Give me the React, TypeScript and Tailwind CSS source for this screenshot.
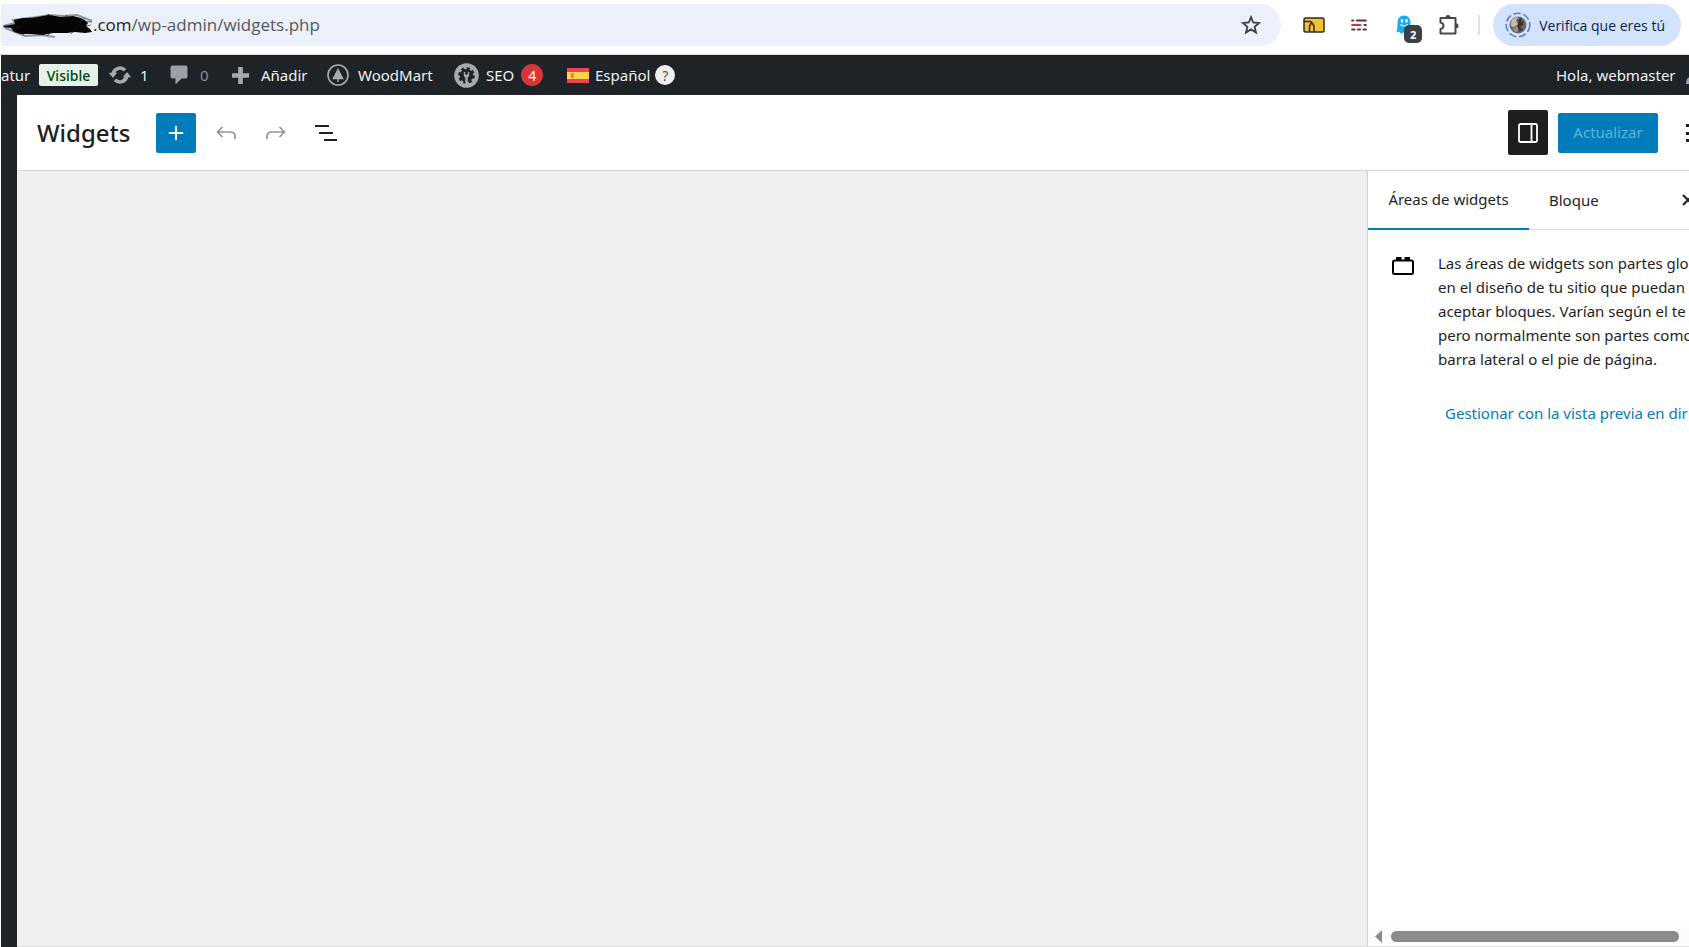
import type { ReactNode } from "react";

const EXTENSION_BUTTON = "flex size-8 items-center justify-center rounded-full";
const EDITOR_BUTTON = "flex size-10 shrink-0 items-center justify-center rounded-xs";

function BrowserBar() {
  return (
    <div className="flex h-[55px] shrink-0 items-start border-b border-[#dadcdc] bg-white pt-1 pr-2">
      <div className="flex h-[42px] flex-1 items-center rounded-r-full bg-[#ebf0fa] pr-3">
        <svg className="h-8 w-[92px] shrink-0" viewBox="0 0 92 32" aria-hidden="true">
          <path
            d="M2 17 L10 15 L14 14 L12 11 L20 10 L36 8 L48 6 L62 7 L76 6 L86 10 L91 12 M4 19 L12 22 L24 27 L40 26 L54 28"
            fill="none"
            stroke="#55585d"
            strokeWidth="2"
            strokeOpacity="0.6"
          />
          <path
            d="M3 17 L9 16 L14 15 L13 11 L22 9 L30 9 L48 6 L60 8 L72 7 L80 9 L85 12 L87 14 L85 17 L89 20 L91 23 L84 24 L74 23 L66 24 L52 24 L42 26 L30 25 L20 25 L13 23 L10 19 L3 18 Z"
            fill="#050505"
          />
          <path
            d="M12 22 L30 8 M22 26 L48 5 M46 27 L66 6 M70 25 L84 9 M2 18 H20 M78 12 L91 13 M80 18 L90 16"
            stroke="#111"
            strokeOpacity="0.6"
          />
        </svg>
        <label htmlFor="address" className="font-['Open_Sans',sans-serif] text-[17px] text-[#1f2023]">
          .com
        </label>
        <input
          id="address"
          defaultValue="/wp-admin/widgets.php"
          className="min-w-0 flex-1 bg-transparent font-['Open_Sans',sans-serif] text-[17px] text-[#55585d] outline-none"
        />
        <button aria-label="Añadir a favoritos" className="flex size-9 items-center justify-center">
          <svg width="20" height="20" viewBox="0 0 20 20" fill="none" stroke="#3f4246" strokeWidth="1.8">
            <path d="M10 2.2 L12.2 7.5 L18 8 L13.6 11.8 L15 17.5 L10 14.4 L5 17.5 L6.4 11.8 L2 8 L7.8 7.5 Z" />
          </svg>
        </button>
      </div>

      <div className="flex h-[42px] items-center gap-[13px] pl-[17px]">
        <button aria-label="Carpeta" className={EXTENSION_BUTTON}>
          <svg width="22" height="16" viewBox="0 0 22 16" fill="#f2c230" stroke="#2e2a20" strokeWidth="1.5">
            <rect x="1" y="1" width="20" height="14" rx="1.5" />
            <path d="M1 4.5 H7 Q9 4.5 9 7 M6.5 15 V9 L8 6.5 H9.5 L11 9 V15" fill="none" />
          </svg>
        </button>
        <button aria-label="Lista de bloqueo" className={EXTENSION_BUTTON}>
          <svg width="16" height="12" viewBox="0 0 16 12" strokeWidth="2.2" strokeLinecap="round">
            <path d="M1.2 1.5 H2.4 M6 1.5 H14.8 M1.2 10.5 H3.5 M7 10.5 H9 M12.5 10.5 H14.8 M13.5 6 H14.8" stroke="#4a403d" />
            <path d="M1.2 6 H9.5" stroke="#e02f36" />
          </svg>
        </button>
        <button aria-label="Bloqueador, 2 rastreadores" className={`relative ${EXTENSION_BUTTON}`}>
          <svg width="16" height="20" viewBox="0 0 16 20">
            <path
              d="M8 0.5 C3.8 0.5 1.6 3.5 1.6 7.5 C1.6 11 1.4 14 0.4 17.6 L3.4 16.8 L5.5 19 L8 17 L10.5 19 L12.6 16.8 L15.6 17.6 C14.6 14 14.4 11 14.4 7.5 C14.4 3.5 12.2 0.5 8 0.5 Z"
              fill="#12aef0"
            />
            <ellipse cx="6" cy="5.8" rx="1.3" ry="1.9" fill="#fff" />
            <ellipse cx="10.5" cy="5.8" rx="1.3" ry="1.9" fill="#fff" />
            <path d="M4.5 9.5 Q8 12.5 11.8 9.5" fill="none" stroke="#fff" strokeWidth="1.2" />
          </svg>
          <span className="absolute top-4 left-4 flex h-[18px] w-[18px] items-center justify-center rounded-[5px] bg-[#3c4043] text-[11px] leading-none font-bold text-white">
            2
          </span>
        </button>
        <button aria-label="Extensiones" className={EXTENSION_BUTTON}>
          <svg width="22" height="22" viewBox="0 0 22 22" fill="none" stroke="#45484c" strokeWidth="2" strokeLinejoin="round">
            <path d="M2.5 4 H17.5 V19.5 H2.5 V15 Q5.5 14.5 5.5 11.8 Q5.5 9 2.5 8.5 Z" />
            <path d="M7.5 3.5 A2.5 2.5 0 0 1 12.5 3.5 Z M18 9.3 A2.5 2.5 0 0 1 18 14.3 Z" fill="#45484c" stroke="none" />
          </svg>
        </button>
        <div className="h-5 w-0.5 bg-[#d5e2fb]" />
        <button className="flex h-[42px] items-center gap-2 rounded-full bg-[#d3e2fd] pr-4 pl-3 font-['Open_Sans',sans-serif] text-[14px] whitespace-nowrap text-[#0b1f4b]">
          <svg width="26" height="26" viewBox="0 0 26 26" aria-hidden="true">
            <circle cx="13" cy="13" r="11.8" fill="none" stroke="#5f7fc0" strokeWidth="1.6" strokeDasharray="7.5 2.6" />
            <circle cx="13" cy="13" r="8.5" fill="#6e6b67" />
            <path d="M6 10 Q8 5 13 5 L11 9 L13 12 L9 15 L6 14 Z" fill="#c2beb6" />
            <path d="M14 7 L17 6 L16 10 L19 9 L18 13 L15 15 L18 18 L13 20 L12 17 Z" fill="#35322f" />
            <path d="M8 17 L12 14 L14 19 L10 20 Z" fill="#96918a" />
          </svg>
          Verifica que eres tú
        </button>
      </div>
    </div>
  );
}

function AdminItem({ icon, children, className = "" }: { icon?: ReactNode; children?: ReactNode; className?: string }) {
  return (
    <a href="#" className={`flex h-full shrink-0 items-center whitespace-nowrap ${className}`}>
      {icon}
      {children}
    </a>
  );
}

function GearIcon() {
  return (
    <svg width="25" height="25" viewBox="0 0 25 25" aria-hidden="true">
      <circle cx="12.5" cy="12.5" r="12.3" fill="#a7aaad" />
      <circle cx="12.5" cy="12.5" r="6.6" fill="#1d2327" />
      <circle cx="12.5" cy="12.5" r="7" fill="none" stroke="#1d2327" strokeWidth="2.6" strokeDasharray="3.1 2.4" />
      <path d="M9.8 9 V12.5 Q9.8 14 11.3 14.6 V21 H13.7 V14.6 Q15.2 14 15.2 12.5 V9 H13.8 V11.5 H11.2 V9 Z" fill="#a7aaad" />
    </svg>
  );
}

function AdminBar() {
  return (
    <nav className="flex h-10 shrink-0 items-center overflow-hidden bg-[#1d2327] text-[15px] text-[#f0f0f1]">
      <AdminItem className="w-[38px]">atur</AdminItem>
      <AdminItem>
        <span className="flex h-[22px] w-[59px] items-center justify-center rounded-xs bg-[#e6f2e8] text-[14px] font-medium text-[#00450c]">
          Visible
        </span>
      </AdminItem>
      <AdminItem
        className="w-[72px] gap-2 pl-[10px]"
        icon={
          <svg width="24" height="20" viewBox="0 0 24 20" fill="none" aria-hidden="true">
            <path d="M5.2 8.5 A7 7 0 0 1 17 5.2 M18.8 11.5 A7 7 0 0 1 7 14.8" stroke="#a7aaad" strokeWidth="3.4" />
            <path d="M0.8 7.8 H9.2 L5 13 Z M23.2 12.2 H14.8 L19 7 Z" fill="#a7aaad" />
          </svg>
        }
      >
        1
      </AdminItem>
      <AdminItem
        className="w-[62px] gap-3 text-[#8c9095]"
        icon={
          <svg width="18" height="20" viewBox="0 0 18 20" fill="#9ca1a7" aria-hidden="true">
            <path d="M2.5 0.5 H15.5 Q17.5 0.5 17.5 2.5 V11.5 Q17.5 13.5 15.5 13.5 H11.5 L5.5 19.5 V13.5 H2.5 Q0.5 13.5 0.5 11.5 V2.5 Q0.5 0.5 2.5 0.5 Z" />
          </svg>
        }
      >
        0
      </AdminItem>
      <AdminItem
        className="w-[95px] gap-3"
        icon={
          <svg width="17" height="17" viewBox="0 0 17 17" aria-hidden="true">
            <path d="M6.2 0 H10.8 V6.2 H17 V10.8 H10.8 V17 H6.2 V10.8 H0 V6.2 H6.2 Z" fill="#a7aaad" />
          </svg>
        }
      >
        Añadir
      </AdminItem>
      <AdminItem
        className="w-[127px] gap-[9px]"
        icon={
          <svg width="22" height="22" viewBox="0 0 22 22" aria-hidden="true">
            <circle cx="11" cy="11" r="10" fill="none" stroke="#a7aaad" strokeWidth="1.6" />
            <path d="M11 4 L16.8 15.2 H11.7 V18 H10.3 V15.2 H5.2 Z" fill="#a7aaad" />
          </svg>
        }
      >
        WoodMart
      </AdminItem>
      <AdminItem className="w-[113px] gap-[7px]" icon={<GearIcon />}>
        SEO
        <span className="flex size-[22px] items-center justify-center rounded-full bg-[#d63638] text-[14px] text-white">4</span>
      </AdminItem>
      <AdminItem
        className="gap-[6px]"
        icon={
          <svg width="22" height="15" viewBox="0 0 22 15" aria-hidden="true">
            <rect width="22" height="15" fill="#ee4453" />
            <rect y="4" width="22" height="7" fill="#fbd34e" />
            <path d="M4 5.5 H7 V6.8 H5.5 V8 H7 V9.5 H4 Z" fill="#e2663f" />
          </svg>
        }
      >
        Español
        <span className="-ml-px flex size-5 items-center justify-center rounded-full bg-[#f0f0f1] text-[14px] text-[#50575e]">?</span>
      </AdminItem>
      <AdminItem className="ml-auto w-[133px] gap-[10px]">
        Hola, webmaster
        <svg className="shrink-0" width="20" height="20" viewBox="0 0 20 20" fill="#8fa2ad" aria-hidden="true">
          <circle cx="10" cy="7" r="4.5" />
          <path d="M0 19 Q0 11.5 6 11.5 H14 Q20 11.5 20 19 Z" />
        </svg>
      </AdminItem>
    </nav>
  );
}

function EditorHeader() {
  return (
    <header className="flex h-[76px] shrink-0 items-center overflow-hidden border-b border-[#d6d6d6] bg-white pl-5">
      <h1 className="w-[119px] text-[24px] font-medium text-[#1e1e1e]">Widgets</h1>
      <div className="flex gap-[10px]">
        <button aria-label="Añadir bloque" className={`${EDITOR_BUTTON} bg-[#007cba]`}>
          <svg width="16" height="16" viewBox="0 0 16 16" stroke="#fff" strokeWidth="1.8">
            <path d="M8 0.8 V15.2 M0.8 8 H15.2" />
          </svg>
        </button>
        <button aria-label="Deshacer" disabled className={EDITOR_BUTTON}>
          <svg width="20" height="16" viewBox="0 0 20 16" fill="none" stroke="#949494" strokeWidth="1.7">
            <path d="M6.5 2 L1.5 7 L6.5 12 M1.5 7 H14 Q19 7 19 11 V14" />
          </svg>
        </button>
        <button aria-label="Rehacer" disabled className={EDITOR_BUTTON}>
          <svg width="20" height="16" viewBox="0 0 20 16" fill="none" stroke="#949494" strokeWidth="1.7">
            <path d="M13.5 2 L18.5 7 L13.5 12 M18.5 7 H6 Q1 7 1 11 V14" />
          </svg>
        </button>
        <button aria-label="Vista de lista" className={EDITOR_BUTTON}>
          <svg width="24" height="18" viewBox="0 0 24 18" stroke="#1e1e1e" strokeWidth="2">
            <path d="M1 2 H15 M5 9 H19 M10 16 H23" />
          </svg>
        </button>
      </div>
      <div className="-mr-[19px] ml-auto flex items-center gap-[10px]">
        <button aria-label="Ajustes" className="flex h-[45px] w-10 items-center justify-center rounded-xs bg-[#1e1e1e]">
          <svg width="20" height="20" viewBox="0 0 20 20" fill="none" stroke="#fff" strokeWidth="1.8">
            <rect x="1" y="1" width="18" height="18" rx="1.5" />
            <path d="M13.5 1 V19" />
          </svg>
        </button>
        <button disabled className="h-10 w-[100px] rounded-xs bg-[#007cba] text-[15px] text-[#66b0d6]">
          Actualizar
        </button>
        <button aria-label="Opciones" className={EDITOR_BUTTON}>
          <svg width="4" height="20" viewBox="0 0 4 20" fill="#1e1e1e">
            <rect y="1" width="4" height="3" />
            <rect y="9" width="4" height="3" />
            <rect y="16" width="4" height="3" />
          </svg>
        </button>
      </div>
    </header>
  );
}

function Sidebar() {
  return (
    <aside className="flex w-[322px] shrink-0 flex-col overflow-hidden border-l border-[#cfcfcf] bg-white text-[15px] text-[#1e1e1e]">
      <div role="tablist" className="flex h-[59px] w-[350px] shrink-0 border-b border-[#dddddd]">
        <button role="tab" aria-selected="true" className="-mb-px w-[161px] border-b-2 border-[#007cba] whitespace-nowrap">
          Áreas de widgets
        </button>
        <button role="tab" aria-selected="false" className="px-5">
          Bloque
        </button>
        <button aria-label="Cerrar" className="mr-[24px] ml-auto">
          <svg width="12" height="12" viewBox="0 0 12 12" stroke="#1e1e1e" strokeWidth="2">
            <path d="M1 1 L11 11 M11 1 L1 11" />
          </svg>
        </button>
      </div>

      <div className="flex w-[400px] flex-1 items-start pt-5 pl-6">
        <svg className="mt-[7px] shrink-0" width="22" height="18" viewBox="0 0 22 18" fill="none" aria-hidden="true">
          <rect x="1" y="3.5" width="20" height="13.5" rx="1.5" stroke="#000" strokeWidth="2" />
          <path d="M4 0 H9.5 V3.5 H4 Z M12.5 0 H18 V3.5 H12.5 Z" fill="#000" />
        </svg>
        <div className="mt-px ml-6 whitespace-nowrap">
          <p className="leading-6">
            Las áreas de widgets son partes glo
            <br />
            en el diseño de tu sitio que puedan
            <br />
            aceptar bloques. Varían según el te
            <br />
            pero normalmente son partes como
            <br />
            barra lateral o el pie de página.
          </p>
          <a href="#" className="mt-[30px] ml-[7px] block leading-6 text-[#007cba]">
            Gestionar con la vista previa en dir
          </a>
        </div>
      </div>

      <div className="mb-px flex h-[18px] shrink-0 items-center bg-[#fcfcfc] pr-[10px] pl-[7px]">
        <svg width="7" height="13" viewBox="0 0 7 13" fill="#8b8b8b" aria-hidden="true">
          <path d="M7 0 V13 L0 6.5 Z" />
        </svg>
        <div className="ml-[9px] h-[11px] flex-1 rounded-full bg-[#8b8b8b]" />
      </div>
    </aside>
  );
}

export default function App() {
  return (
    <div className="flex h-screen flex-col overflow-hidden bg-white pl-px font-['Noto_Sans','Open_Sans',sans-serif]">
      <BrowserBar />
      <AdminBar />
      <div className="flex min-h-0 flex-1 bg-[#1d2327] pl-4">
        <div className="flex min-w-0 flex-1 flex-col border-b border-[#dddddd] bg-white">
          <EditorHeader />
          <div className="flex min-h-0 flex-1">
            <main className="flex-1 bg-[#efefef]" />
            <Sidebar />
          </div>
        </div>
      </div>
    </div>
  );
}
